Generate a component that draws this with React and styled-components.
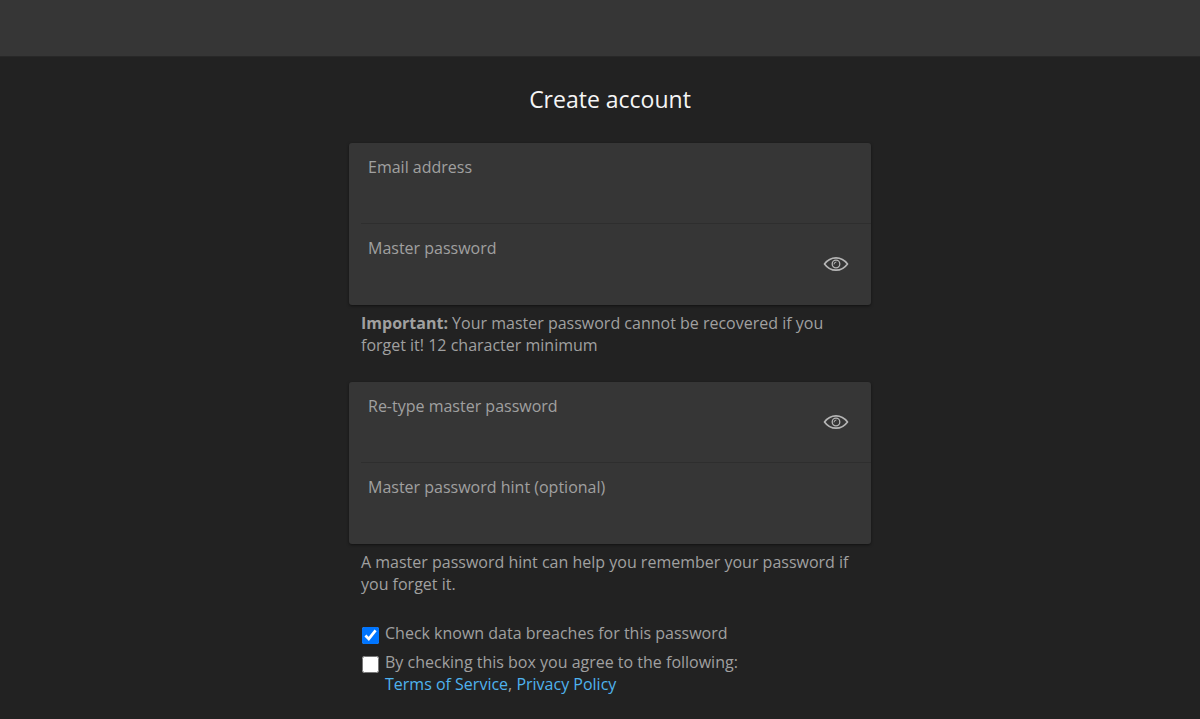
import React, { useState } from 'react'
import styled, { createGlobalStyle } from 'styled-components'

const App = () => {
  const [showMaster, setShowMaster] = useState(false)
  const [showRetype, setShowRetype] = useState(false)

  return (
    <>
      <GlobalStyle />
      <TopBar />
      <Page>
        <Form onSubmit={e => e.preventDefault()}>
          <Title>Create account</Title>
          <Box>
            <Row>
              <Field>
                <Label htmlFor='email'>Email address</Label>
                <Input id='email' type='email' />
              </Field>
            </Row>
            <Row>
              <Field>
                <Label htmlFor='master'>Master password</Label>
                <Input id='master' type={showMaster ? 'text' : 'password'} />
              </Field>
              <ToggleButton shown={showMaster} onToggle={() => setShowMaster(!showMaster)} />
            </Row>
          </Box>
          <Help>
            <strong>Important:</strong> Your master password cannot be recovered if you forget it! 12 character minimum
          </Help>
          <Box>
            <Row>
              <Field>
                <Label htmlFor='retype'>Re-type master password</Label>
                <Input id='retype' type={showRetype ? 'text' : 'password'} />
              </Field>
              <ToggleButton shown={showRetype} onToggle={() => setShowRetype(!showRetype)} />
            </Row>
            <Row>
              <Field>
                <Label htmlFor='hint'>Master password hint (optional)</Label>
                <Input id='hint' type='text' />
              </Field>
            </Row>
          </Box>
          <Help>A master password hint can help you remember your password if you forget it.</Help>
          <Checks>
            <Check>
              <Checkbox id='breaches' defaultChecked />
              <label htmlFor='breaches'>Check known data breaches for this password</label>
            </Check>
            <Check>
              <Checkbox id='terms' />
              <div>
                <label htmlFor='terms'>By checking this box you agree to the following:</label>
                <br />
                <Link href='#terms'>Terms of Service</Link>, <Link href='#privacy'>Privacy Policy</Link>
              </div>
            </Check>
          </Checks>
        </Form>
      </Page>
    </>
  )
}

const ToggleButton = ({ shown, onToggle }) => (
  <EyeButton type='button' aria-label='Toggle visibility' aria-pressed={shown} onClick={onToggle}>
    <svg width='26' height='18' viewBox='0 0 26 18' fill='none' stroke='currentColor'>
      <path d='M1.500 9C4.500 4.900 8.400 2.800 13 2.800S21.500 4.900 24.500 9c-3 4.100-6.900 6.200-11.500 6.200S4.500 13.100 1.500 9Z' strokeWidth='1.700' strokeLinejoin='round' />
      <circle cx='13' cy='9' r='3.800' strokeWidth='1.300' />
      <path d='M11 9a2 2 0 0 1 2-2' strokeWidth='1' strokeLinecap='round' />
    </svg>
  </EyeButton>
)

const GlobalStyle = createGlobalStyle`
  body{
    margin:0;
    background:#222;
    color:#a0a0a0;
    font-family:"Open Sans", sans-serif;
    font-size:16px;
    line-height:22px;
  }
`

const TopBar = styled.header`
  height:56px;
  background:#363636;
  border-bottom:1px solid #282828;
`

const Page = styled.main`
  padding:26px 0 24px 20px;
`

const Form = styled.form`
  max-width:522px;
  margin:0 auto;
`

const Title = styled.h1`
  margin:0 0 28px;
  color:#f5f5f5;
  font-size:23px;
  font-weight:400;
  line-height:32px;
  text-align:center;
`

const Box = styled.div`
  padding:0 0 1px 12px;
  background:#363636;
  border-radius:3px;
  box-shadow:0 1px 3px rgba(0,0,0,0.5);
`

const Row = styled.div`
  display:flex;
  align-items:center;
  min-height:80px;
  padding-right:20px;
  & + &{
    border-top:1px solid #2e2e2e;
  }
`

const Field = styled.div`
  flex:1;
  padding:0 7px;
`

const Label = styled.label`
  display:block;
`

const Input = styled.input`
  display:block;
  box-sizing:border-box;
  width:100%;
  height:32px;
  padding:0;
  border:none;
  outline:none;
  background:transparent;
  color:#fff;
  font:inherit;
`

const EyeButton = styled.button`
  display:flex;
  padding:2px;
  border:none;
  background:none;
  color:#b5b5b5;
  cursor:pointer;
`

const Help = styled.p`
  margin:0;
  padding:7px 12px 26px;
`

const Checks = styled.div`
  display:grid;
  gap:7px;
  padding:1px 12px 0;
`

const Check = styled.div`
  display:flex;
  align-items:flex-start;
  gap:6px;
`

const Checkbox = styled.input.attrs({ type: 'checkbox' })`
  flex:none;
  width:17px;
  height:17px;
  margin:5px 0 0 1px;
`

const Link = styled.a`
  color:#4fb3ee;
  text-decoration:none;
`

export default App
